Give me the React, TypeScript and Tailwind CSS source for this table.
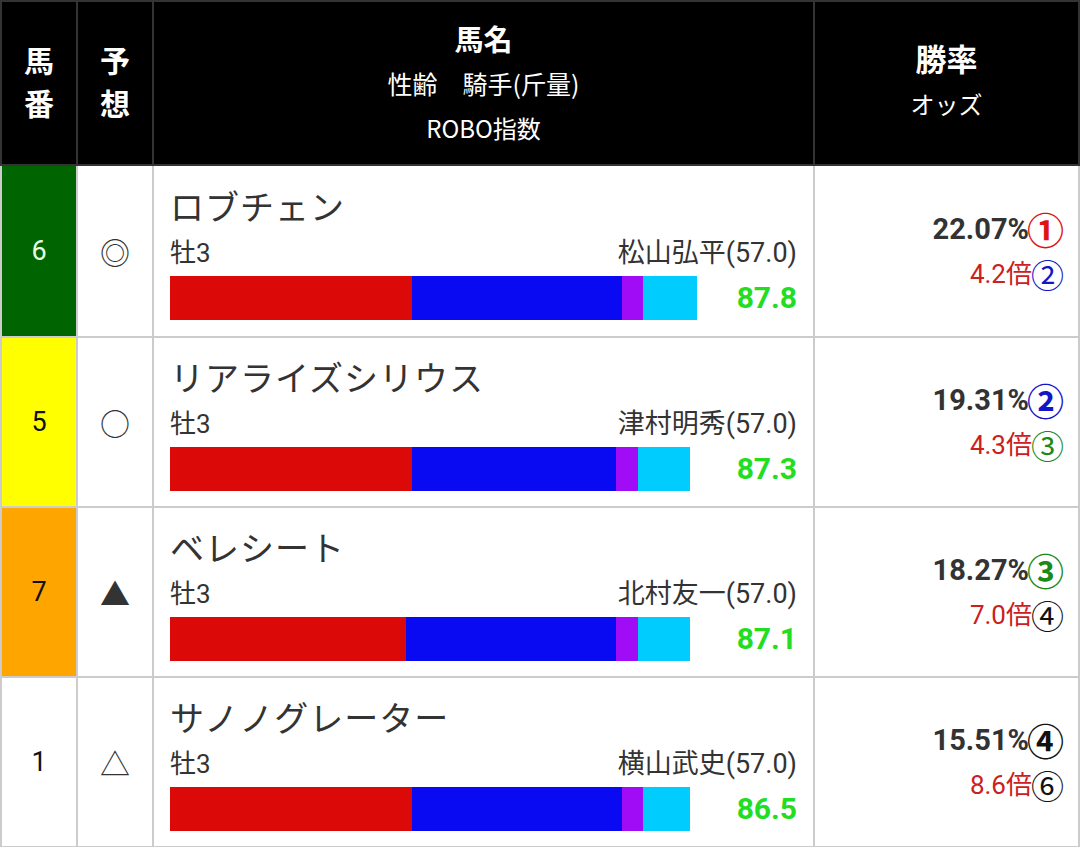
import React from "react";

const CIRCLED = ["", "①", "②", "③", "④", "⑤", "⑥", "⑦", "⑧"];
const rankColor = (r: number) =>
  r === 1 ? "text-[#dd1414]" : r === 2 ? "text-[#1414c8]" : r === 3 ? "text-[#1b8a1b]" : "text-[#111]";

type Row = {
  num: string;
  bg: string;
  fg: string;
  mark: string;
  name: string;
  jockey: string;
  bars: number[];
  score: string;
  pct: string;
  pr: number;
  odds: string;
  or: number;
  h: string;
};

const rows: Row[] = [
  { num: "6", bg: "bg-[#006400]", fg: "text-[#e6ffe6]", mark: "◎", name: "ロブチェン", jockey: "松山弘平(57.0)", bars: [242, 210, 21, 54], score: "87.8", pct: "22.07%", pr: 1, odds: "4.2倍", or: 2, h: "h-[170px]" },
  { num: "5", bg: "bg-[#ffff00]", fg: "text-[#111]", mark: "○", name: "リアライズシリウス", jockey: "津村明秀(57.0)", bars: [242, 204, 22, 52], score: "87.3", pct: "19.31%", pr: 2, odds: "4.3倍", or: 3, h: "h-[168px]" },
  { num: "7", bg: "bg-[#ffa500]", fg: "text-[#111]", mark: "▲", name: "ベレシート", jockey: "北村友一(57.0)", bars: [236, 210, 22, 52], score: "87.1", pct: "18.27%", pr: 3, odds: "7.0倍", or: 4, h: "h-[168px]" },
  { num: "1", bg: "bg-white", fg: "text-[#111]", mark: "△", name: "サノノグレーター", jockey: "横山武史(57.0)", bars: [242, 210, 21, 47], score: "86.5", pct: "15.51%", pr: 4, odds: "8.6倍", or: 6, h: "h-[168px]" },
];

const barColors = ["bg-[#dc0909]", "bg-[#0a0af2]", "bg-[#a00cf5]", "bg-[#00cdfd]"];

const cols = "grid grid-cols-[74px_74px_659px_1fr] gap-[2px]";
const cjk = { fontFamily: '"Noto Sans CJK JP", sans-serif' };

export default function App() {
  return (
    <div
      className="w-[1080px] h-[847px] overflow-hidden bg-white"
      style={{ fontFamily: 'Roboto, "Noto Sans CJK JP", sans-serif' }}
    >
      {/* header */}
      <div className={`${cols} bg-[#333] p-[2px] h-[166px]`} style={cjk}>
        <div className="bg-black text-white flex flex-col items-center justify-center font-bold text-[30px] leading-[43px] pb-[4px]">
          <span>馬</span>
          <span>番</span>
        </div>
        <div className="bg-black text-white flex flex-col items-center justify-center font-bold text-[30px] leading-[43px] pb-[4px]">
          <span>予</span>
          <span>想</span>
        </div>
        <div className="bg-black text-white flex flex-col items-center justify-center">
          <span className="font-bold text-[29px] leading-[44px]">馬名</span>
          <span className="text-[25px] leading-[46px]">性齢　騎手(斤量)</span>
          <span className="text-[24px] leading-[44px]">ROBO指数</span>
        </div>
        <div className="bg-black text-white flex flex-col items-center justify-center">
          <span className="font-bold text-[31px] leading-[46px] -mt-[4px]">勝率</span>
          <span className="text-[24px] leading-[46px]">オッズ</span>
        </div>
      </div>

      {/* body */}
      <div className="flex flex-col gap-[2px] bg-[#cccccc] px-[2px] pb-[2px]">
        {rows.map((r) => (
          <div key={r.num} className={`${cols} ${r.h}`}>
            <div className={`${r.bg} ${r.fg} flex items-center justify-center text-[27px]`}>{r.num}</div>
            <div className="bg-white flex items-center justify-center text-[30px] text-[#333]" style={cjk}>
              {r.mark}
            </div>
            <div className="bg-white flex flex-col justify-center px-4 pt-[4px] text-[#333]">
              <div className="text-[34px] leading-[44px] tracking-[1px]">{r.name}</div>
              <div className="flex justify-between items-center text-[26px] leading-[46px]">
                <span>牡3</span>
                <span className="text-[27px]">{r.jockey}</span>
              </div>
              <div className="flex items-center justify-between h-[44px]">
                <div className="flex h-[44px]">
                  {r.bars.map((w, i) => (
                    <div key={i} className={`${barColors[i]} h-full`} style={{ width: `${w}px` }} />
                  ))}
                </div>
                <span className="font-bold text-[30px] text-[#22dd22] leading-none">{r.score}</span>
              </div>
            </div>
            <div className="bg-white flex flex-col items-end justify-center pr-[14px]">
              <div className="flex items-center h-[45px]">
                <span className="font-bold text-[29px] text-[#333] leading-[34px]">{r.pct}</span>
                <span
                  className={`inline-block h-[36px] leading-[36px] font-bold text-[37px] -ml-[2px] ${rankColor(r.pr)}`}
                  style={cjk}
                >
                  {CIRCLED[r.pr]}
                </span>
              </div>
              <div className="flex items-center h-[45px]">
                <span className="text-[26px] text-[#cc2020] leading-[32px]">{r.odds}</span>
                <span
                  className={`inline-block h-[34px] leading-[34px] text-[33px] -ml-[1px] ${rankColor(r.or)}`}
                  style={cjk}
                >
                  {CIRCLED[r.or]}
                </span>
              </div>
            </div>
          </div>
        ))}
      </div>
    </div>
  );
}
